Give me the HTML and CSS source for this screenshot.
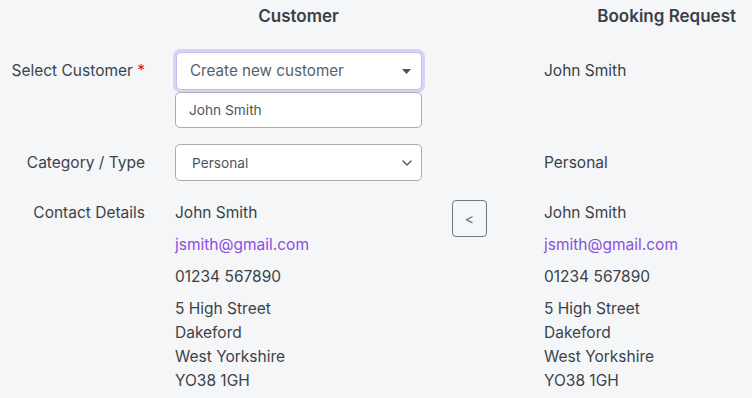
FILE: index.html
```html
<!DOCTYPE html>
<html lang="en">
<head>
<meta charset="utf-8">
<title>Customer merge</title>
<link rel="stylesheet" href="styles.css">
</head>
<body>
<div class="page">
  <div class="row head-row">
    <div class="label"></div>
    <div class="col-main head">Customer</div>
    <div class="col-mid"></div>
    <div class="col-right head head-right">Booking Request</div>
  </div>

  <div class="row row-select">
    <div class="label">Select Customer <span class="req">*</span></div>
    <div class="col-main">
      <div class="fake-select focused">
        <span class="fs-text">Create new customer</span>
        <svg class="caret" width="9" height="5" viewBox="0 0 9 5"><path d="M0 0h9L4.5 5z" fill="#4a5157"/></svg>
      </div>
    </div>
    <div class="col-mid"></div>
    <div class="col-right value">John Smith</div>
  </div>

  <div class="row row-option">
    <div class="label"></div>
    <div class="col-main">
      <div class="option-box">John Smith</div>
    </div>
    <div class="col-mid"></div>
    <div class="col-right"></div>
  </div>

  <div class="row row-category">
    <div class="label">Category / Type</div>
    <div class="col-main">
      <div class="fake-select small">
        <span class="fs-text">Personal</span>
        <svg class="chev" width="10" height="6" viewBox="0 0 10 6"><path d="M1 1l4 4 4-4" fill="none" stroke="#5f676e" stroke-width="1.6" stroke-linecap="round" stroke-linejoin="round"/></svg>
      </div>
    </div>
    <div class="col-mid"></div>
    <div class="col-right value">Personal</div>
  </div>

  <div class="row row-contact">
    <div class="label">Contact Details</div>
    <div class="col-main details">
      <p>John Smith</p>
      <p><a class="mail" href="#">jsmith@gmail.com</a></p>
      <p>01234 567890</p>
      <p>5 High Street<br>Dakeford<br>West Yorkshire<br>YO38 1GH</p>
    </div>
    <div class="col-mid"><button class="copy-btn" type="button">&lt;</button></div>
    <div class="col-right details">
      <p>John Smith</p>
      <p><a class="mail" href="#">jsmith@gmail.com</a></p>
      <p>01234 567890</p>
      <p>5 High Street<br>Dakeford<br>West Yorkshire<br>YO38 1GH</p>
    </div>
  </div>
</div>
</body>
</html>
```

FILE: styles.css
```css
* { box-sizing: border-box; }
html, body {
  margin: 0;
  background: #f5f6f8;
}
body {
  font-family: Inter, "Liberation Sans", Arial, sans-serif;
  font-size: 15.5px;
  line-height: 24px;
  color: #3b4249;
}
.page {
  padding: 4px 16px 0 0;
}
.row {
  display: grid;
  grid-template-columns: 175px 247px 122px 1fr;
  align-items: center;
}
.label {
  text-align: right;
  padding-right: 30px;
}
.req { color: #e0121f; }
.head {
  font-weight: 600;
  font-size: 17px;
  text-align: center;
  color: #3a4147;
}
.head-right { text-align: right; }
.head-row { height: 24px; }

.row-select { margin-top: 24px; }
.row-option { margin-top: 2px; }
.row-category { margin-top: 16px; }
.row-contact { margin-top: 19px; align-items: start; }

.fake-select {
  display: flex;
  align-items: center;
  justify-content: space-between;
  background: #fff;
  border: 1px solid #a7adb3;
  border-radius: 5px;
  height: 38px;
  padding: 0 10px 0 13px;
  width: 246px;
  margin-left: 1px;
}
.fake-select.focused {
  border-color: #cdb9f3;
  box-shadow: 0 0 0 3px #dcd0f6;
  position: relative;
  z-index: 0;
  font-size: 15.2px;
  color: #56606a;
}
.fake-select.small {
  height: 37px;
  width: 247px;
  margin-left: 0;
  padding: 0 9px 0 16px;
  font-size: 13.7px;
  color: #4d555c;
}

.option-box {
  position: relative;
  z-index: 1;
  background: #fff;
  border: 1px solid #a7adb3;
  border-radius: 5px;
  height: 36px;
  padding: 0 13px;
  display: flex;
  align-items: center;
  font-size: 13.7px;
  color: #4f575e;
}

.details { padding-top: 1px; }
.details p { margin: 0 0 8px; }
.row-contact .label { padding-top: 1px; }
.mail {
  color: #8a4fe0;
  text-decoration: none;
}
.col-mid { display: flex; }
.copy-btn {
  margin-left: 30px;
  width: 35px;
  height: 37px;
  border: 1px solid #6f7880;
  border-radius: 4px;
  background: transparent;
  color: #6c757d;
  font-family: Inter, "Liberation Sans", Arial, sans-serif;
  font-size: 14px;
  padding: 0;
}
```
